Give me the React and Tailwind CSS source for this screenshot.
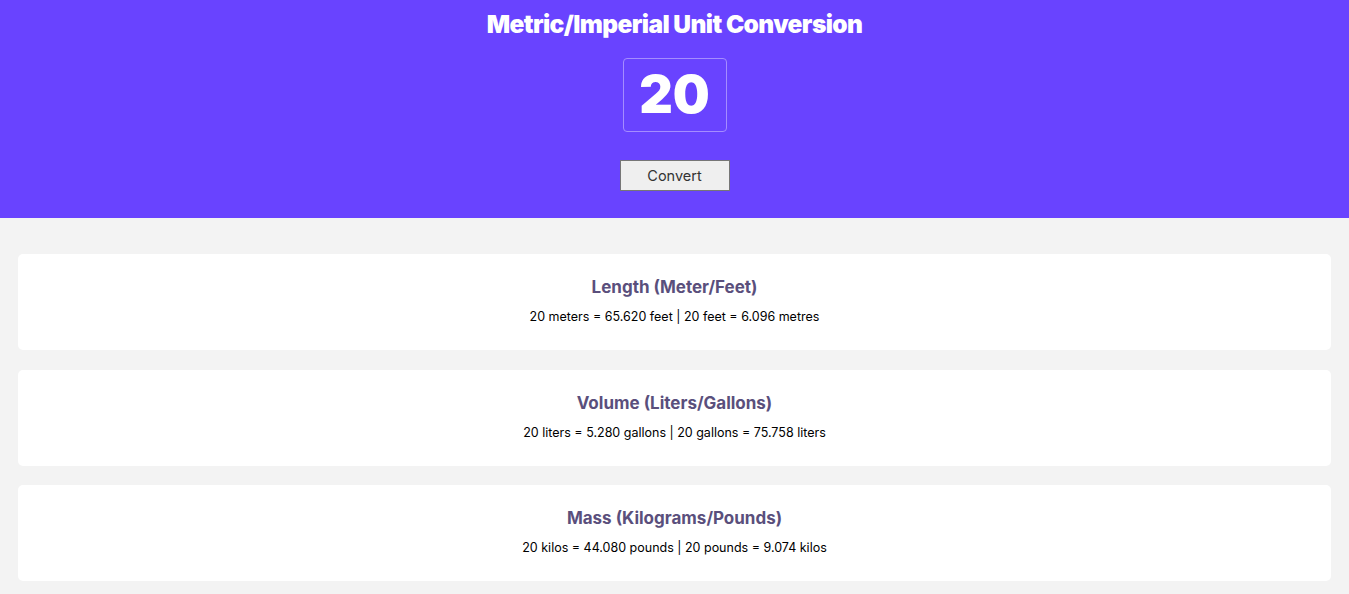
import React, { useState } from 'react';

const convert = (n) => [
    {
        title: 'Length (Meter/Feet)',
        text: `${n} meters = ${(n * 3.281).toFixed(3)} feet | ${n} feet = ${(n / 3.281).toFixed(3)} metres`,
    },
    {
        title: 'Volume (Liters/Gallons)',
        text: `${n} liters = ${(n * 0.264).toFixed(3)} gallons | ${n} gallons = ${(n / 0.264).toFixed(3)} liters`,
    },
    {
        title: 'Mass (Kilograms/Pounds)',
        text: `${n} kilos = ${(n * 2.204).toFixed(3)} pounds | ${n} pounds = ${(n / 2.204).toFixed(3)} kilos`,
    },
];

export default function App() {
    const [value, setValue] = useState(20);
    const [results, setResults] = useState(convert(20));

    return (
        <div className="min-h-screen bg-[#f3f3f3] font-['Inter',sans-serif]">
            <header className="bg-[#6943ff] h-[218px] flex flex-col items-center pt-[8px]">
                <h1 className="text-white text-[24.5px] font-black tracking-[-0.6px] leading-[32px]">
                    Metric/Imperial Unit Conversion
                </h1>
                <input
                    type="number"
                    value={value}
                    onChange={(e) => setValue(e.target.value)}
                    className="mt-[18px] w-[104px] h-[74px] bg-transparent border border-[#a58cff] rounded-[4px] text-white text-center text-[52px] font-black outline-none [appearance:textfield] [&::-webkit-inner-spin-button]:appearance-none"
                />
                <button
                    onClick={() => setResults(convert(Number(value)))}
                    className="mt-[28px] w-[110px] h-[31px] bg-[#efefef] border border-[#767676] text-[#333] text-[14.5px] font-normal"
                >
                    Convert
                </button>
            </header>

            <main className="px-[18px] pt-[36px] pb-[12px] flex flex-col gap-[19.5px]">
                {results.map((r) => (
                    <section key={r.title} className="bg-white rounded-[5px] h-[96px] flex flex-col items-center pt-[21px]">
                        <h2 className="text-[#5a4f7c] text-[17px] font-bold leading-[24px]">{r.title}</h2>
                        <p className="mt-[9px] text-black text-[12.5px] leading-[18px]">{r.text}</p>
                    </section>
                ))}
            </main>
        </div>
    );
}
